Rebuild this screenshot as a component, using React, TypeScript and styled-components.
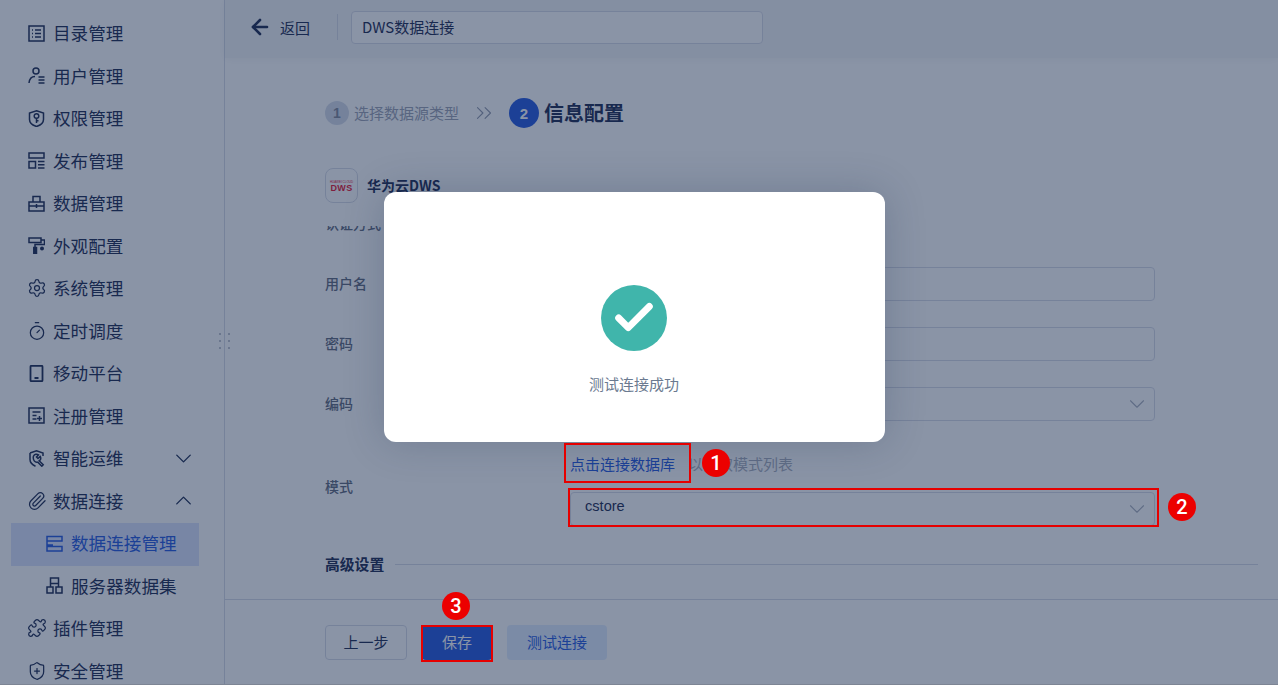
import { ReactNode } from 'react';
import styled, { createGlobalStyle } from 'styled-components';
import { ArrowLeft, Check, ChevronDown, ChevronUp, ChevronsRight, Paperclip, Puzzle, Settings, ShieldPlus, Timer } from 'lucide-react';

const GlobalStyle = createGlobalStyle`
html, body {
  margin: 0;
  height: 100%;
  overflow: hidden;
  background: #fff;
  font-family: "Noto Sans CJK SC", "Liberation Sans", sans-serif;
  color: #1a2850;
}
* { box-sizing: border-box; }
`

const Frame = styled.div`
position: relative;
display: flex;
height: 685px;
width: 1278px;
overflow: hidden;
border-bottom: 1px solid #7d8594;
`

const Sidebar = styled.nav`
flex: 0 0 225px;
padding: 13px 25px 0 11px;
border-right: 1px solid #d7dbe7;
overflow: hidden;
`

const NavRow = styled.div<{ $active?: boolean; $sub?: boolean }>`
display: flex;
align-items: center;
height: 42.5px;
padding-left: ${props => props.$sub ? '35px' : '17px'};
padding-bottom: 2px;
font-size: 17.6px;
line-height: 1;
color: ${props => props.$active ? '#2357df' : '#1a2850'};
background: ${props => props.$active ? '#dbe3fd' : 'transparent'};
`

const NavIcon = styled.span<{ $sub?: boolean }>`
display: flex;
align-items: center;
justify-content: center;
width: 17px;
height: 17px;
margin-right: 8px;
svg { display: block; flex: none; }
`

const NavArrow = styled.span`
display: flex;
margin-left: auto;
margin-right: 2px;
`

const Main = styled.main`
flex: 1;
min-width: 0;
display: flex;
flex-direction: column;
`

const TopBar = styled.header`
flex: 0 0 58px;
display: flex;
align-items: center;
padding: 0 0 4px 23px;
background: #f3f4f6;
box-shadow: 0 1px 8px rgba(31, 45, 83, 0.06);
`

const BackLink = styled.span`
display: flex;
align-items: center;
gap: 8px;
font-size: 15px;
`

const TopDivider = styled.span`
width: 1px;
height: 26px;
margin: 0 13px 0 27px;
background: #d7dbe7;
`

const NameBox = styled.div`
width: 412px;
height: 33px;
padding-left: 10px;
border: 1px solid #d7dbe7;
border-radius: 4px;
background: #fff;
font-size: 15px;
line-height: 30px;
`

const Body = styled.section`
flex: 1;
min-height: 0;
display: flex;
flex-direction: column;
padding: 40px 20px 0 100px;
`

const Steps = styled.div`
display: flex;
align-items: center;
height: 30px;
`

const StepDot = styled.span<{ $current?: boolean }>`
display: flex;
align-items: center;
justify-content: center;
border-radius: 50%;
font-family: "Liberation Sans", sans-serif;
font-weight: 700;
width: ${props => props.$current ? '30px' : '24px'};
height: ${props => props.$current ? '30px' : '24px'};
font-size: ${props => props.$current ? '15px' : '14px'};
background: ${props => props.$current ? '#2357df' : '#d5dbe9'};
color: ${props => props.$current ? '#fff' : '#7f8698'};
`

const StepDone = styled.span`
margin: 0 0 2px 5px;
font-size: 15px;
color: #9aa1b3;
`

const StepArrow = styled.span`
display: flex;
width: 50px;
justify-content: center;
color: #8f97ab;
`

const StepNow = styled.span`
margin: 0 0 2px 5px;
font-size: 20px;
font-weight: 700;
`

const SourceHead = styled.div`
display: flex;
align-items: center;
gap: 9px;
margin-top: 40px;
height: 35px;
`

const LogoBox = styled.div`
display: flex;
flex-direction: column;
align-items: center;
justify-content: center;
width: 33px;
height: 35px;
border: 1px solid #d7dbe7;
border-radius: 8px;
color: #e8132f;
`

const LogoSmall = styled.span`
font-family: "Liberation Sans", sans-serif;
font-size: 3px;
line-height: 4px;
`

const LogoBig = styled.span`
font-family: "Liberation Sans", sans-serif;
font-size: 9px;
line-height: 8px;
font-weight: 700;
letter-spacing: 0.3px;
`

const SourceName = styled.span`
margin-bottom: 1px;
font-size: 14px;
font-weight: 700;
`

const FormScroll = styled.div`
flex: 1;
min-height: 0;
margin-top: 23px;
overflow: hidden;
`

// the form is scrolled a little in the reference, first row is cut by the head
const FormInner = styled.div`
margin-top: -32px;
`

const FormRow = styled.div<{ $tall?: boolean }>`
display: flex;
align-items: center;
height: ${props => props.$tall ? '79px' : '60px'};
margin-top: ${props => props.$tall ? '13px' : '0'};
`

const Label = styled.label`
flex: 0 0 245px;
margin-bottom: 2px;
font-size: 14px;
font-weight: 500;
color: #5f687c;
`

const Control = styled.div`
width: 585px;
`

const Field = styled.div`
display: flex;
align-items: center;
justify-content: space-between;
height: 34px;
padding: 0 4px 0 15px;
border: 1px solid #d7dbe7;
border-radius: 4px;
background: #fff;
color: #a9afbd;
`

const FieldValue = styled.span`
margin: 0 0 6px -1px;
font-family: "Liberation Sans", sans-serif;
font-size: 14.6px;
color: #1a2850;
`

const HintLine = styled.div`
display: flex;
align-items: center;
gap: 13px;
height: 36px;
margin-bottom: 9px;
padding-bottom: 4px;
font-size: 15px;
`

const HintLink = styled.a`
color: #2357df;
`

const HintText = styled.span`
color: #a9afbd;
`

const Advanced = styled.div`
display: flex;
align-items: center;
gap: 11px;
height: 20px;
margin-top: 28px;
font-size: 14.8px;
font-weight: 700;
line-height: 16px;
&::after {
  content: "";
  flex: 1;
  height: 1px;
  margin-top: 1px;
  background: #d7dbe7;
}
`

const Footer = styled.footer`
flex: 0 0 85px;
display: flex;
gap: 15px;
align-items: flex-start;
padding: 25px 0 0 100px;
border-top: 1px solid #d7dbe7;
background: #fff;
`

const Button = styled.button<{ $kind: 'plain' | 'primary' | 'soft'; $w: number }>`
width: ${props => props.$w}px;
height: 35px;
padding: 0 0 2px;
border-radius: 4px;
font: 15px "Noto Sans CJK SC", sans-serif;
border: ${props => props.$kind === 'plain' ? '1px solid #d7dbe7' : 'none'};
background: ${props => props.$kind === 'primary' ? '#2357df' : props.$kind === 'soft' ? '#e1edff' : '#fff'};
color: ${props => props.$kind === 'primary' ? '#fff' : props.$kind === 'soft' ? '#2357df' : '#1a2850'};
`

const Handle = styled.div`
position: absolute;
left: 219px;
top: 333px;
display: grid;
grid-template-columns: 2px 2px;
column-gap: 7px;
row-gap: 5px;
`

const HandleDot = styled.i`
width: 2px;
height: 2px;
border-radius: 50%;
background: #a9afbd;
`

const Overlay = styled.div`
position: absolute;
inset: 0;
background: rgba(21, 41, 77, 0.5);
`

const Modal = styled.div`
position: absolute;
left: 384px;
top: 192px;
width: 501px;
height: 250px;
display: flex;
flex-direction: column;
align-items: center;
padding-top: 93px;
border-radius: 12px;
background: #fff;
box-shadow: 0 0 40px rgba(21, 41, 77, 0.22);
`

const SuccessMark = styled.div`
display: flex;
align-items: center;
justify-content: center;
width: 66px;
height: 66px;
margin-right: 1px;
border-radius: 50%;
background: #40b5ab;
color: #fff;
`

const ModalText = styled.p`
margin: 22px 1px 0 0;
font-size: 15px;
line-height: 22px;
color: #6b7a90;
`

const RedBox = styled.div<{ $x: number; $y: number; $w: number; $h: number }>`
position: absolute;
left: ${props => props.$x}px;
top: ${props => props.$y}px;
width: ${props => props.$w}px;
height: ${props => props.$h}px;
border: 2px solid #e60000;
`

const Badge = styled.span<{ $x: number; $y: number }>`
position: absolute;
left: ${props => props.$x - 14}px;
top: ${props => props.$y - 14}px;
display: flex;
align-items: center;
justify-content: center;
width: 28px;
height: 28px;
border-radius: 50%;
background: #ec0000;
color: #fff;
font-family: Roboto, "Liberation Sans", sans-serif;
font-size: 20px;
font-weight: 500;
`

const Glyph = ({ children }: { children: ReactNode }) => (
  <svg width="17" height="17" viewBox="0 0 17 17" fill="none" stroke="currentColor" strokeWidth="1.5">
    {children}
  </svg>
);

const icons: Record<string, ReactNode> = {
  catalog: <Glyph><rect x="1" y="1" width="15" height="15" /><path d="M4 5h1M7 5h6M4 8.500h1M7 8.500h6M4 12h1M7 12h6" /></Glyph>,
  user: <Glyph><circle cx="8" cy="4" r="3" /><path d="M1 16c.4-3.800 2.600-6.500 6-6.500M10.500 10h6M10.500 13h6M10.500 16h6" /></Glyph>,
  perm: <Glyph><path d="M8.500 .8l7 2.200v6.500c0 3.200-3.200 5.800-7 7-3.800-1.200-7-3.800-7-7V3z" /><circle cx="8.500" cy="6" r="2.300" /><path d="M8.500 8.300v4.700M8.500 10.800h2" /></Glyph>,
  publish: <Glyph><path d="M1 1h15v5H1zM1 9.500h6.500V16H1zM10 9.500h6.500M10 12.800h6.500M10 16h6.500" /></Glyph>,
  data: <Glyph><path d="M1 7h15v9H1zM5 7V1.500h7V7M1 11h15M8.500 9v4" /></Glyph>,
  look: <Glyph><path d="M1 1h12v4.500H1zM13 3h3.500v4.500H7V10" /><path d="M5.800 10.500h2.700V16.500H5.800z" fill="currentColor" /><circle cx="14" cy="11.500" r="2" fill="currentColor" stroke="none" /></Glyph>,
  mobile: <Glyph><rect x="2.500" y=".8" width="12" height="15.400" rx="1" strokeWidth="1.800" /><path d="M6.500 13h4" strokeWidth="2" /></Glyph>,
  register: <Glyph><path d="M1 1h15v15H1zM4.500 5h8M4.500 8.500h4M4.500 12h4M11.500 9v5M9 11.500h5" /></Glyph>,
  ops: <Glyph><path d="M2 3l6.500-2.200L15 3v3M2 3v6.500c0 3 2.500 5.300 5.500 6.700" /><path d="M5.500 6c1-2 3.400-2.300 5-1.200L8.500 7l1.500 1.500 2.200-2c1 1.700.6 3.500-1 4.300l4 4-1.400 1.400-4-4C7 13 4.500 10 5.500 6z" /></Glyph>,
  conn: <Glyph><path d="M1 1.500h15v4.500H1zM1 6v4h6M1 11.500h15V16H1z" /></Glyph>,
  server: <Glyph><path d="M4.500 1h8v5.500h-8zM1 10h6v6H1zM10 10h6v6h-6zM4.500 6.500V10M12.500 6.500V10" /></Glyph>,
};

const lucide = { size: 20, strokeWidth: 1.5 };

const NAV: { label: string; icon: ReactNode; sub?: boolean; active?: boolean; arrow?: 'up' | 'down' }[] = [
  { label: '目录管理', icon: icons.catalog },
  { label: '用户管理', icon: icons.user },
  { label: '权限管理', icon: icons.perm },
  { label: '发布管理', icon: icons.publish },
  { label: '数据管理', icon: icons.data },
  { label: '外观配置', icon: icons.look },
  { label: '系统管理', icon: <Settings {...lucide} /> },
  { label: '定时调度', icon: <Timer {...lucide} /> },
  { label: '移动平台', icon: icons.mobile },
  { label: '注册管理', icon: icons.register },
  { label: '智能运维', icon: icons.ops, arrow: 'down' },
  { label: '数据连接', icon: <Paperclip {...lucide} />, arrow: 'up' },
  { label: '数据连接管理', icon: icons.conn, sub: true, active: true },
  { label: '服务器数据集', icon: icons.server, sub: true },
  { label: '插件管理', icon: <Puzzle {...lucide} /> },
  { label: '安全管理', icon: <ShieldPlus {...lucide} /> },
];

const DOTS = [0, 1, 2, 3, 4, 5];

export default function App() {
  return (
    <Frame>
      <GlobalStyle />
      <Sidebar>
        {NAV.map(item => (
          <NavRow key={item.label} $active={item.active} $sub={item.sub}>
            <NavIcon $sub={item.sub}>{item.icon}</NavIcon>
            {item.label}
            {item.arrow && (
              <NavArrow>
                {item.arrow === 'up' ? <ChevronUp size={27} strokeWidth={1.2} /> : <ChevronDown size={27} strokeWidth={1.2} />}
              </NavArrow>
            )}
          </NavRow>
        ))}
      </Sidebar>
      <Main>
        <TopBar>
          <BackLink><ArrowLeft size={24} strokeWidth={2.6} />返回</BackLink>
          <TopDivider />
          <NameBox>DWS数据连接</NameBox>
        </TopBar>
        <Body>
          <Steps>
            <StepDot>1</StepDot>
            <StepDone>选择数据源类型</StepDone>
            <StepArrow><ChevronsRight size={26} strokeWidth={1} /></StepArrow>
            <StepDot $current>2</StepDot>
            <StepNow>信息配置</StepNow>
          </Steps>
          <SourceHead>
            <LogoBox>
              <LogoSmall>HUAWEI CLOUD</LogoSmall>
              <LogoBig>DWS</LogoBig>
            </LogoBox>
            <SourceName>华为云DWS</SourceName>
          </SourceHead>
          <FormScroll>
            <FormInner>
              <FormRow>
                <Label>认证方式</Label>
              </FormRow>
              <FormRow>
                <Label>用户名</Label>
                <Control><Field /></Control>
              </FormRow>
              <FormRow>
                <Label>密码</Label>
                <Control><Field /></Control>
              </FormRow>
              <FormRow>
                <Label>编码</Label>
                <Control><Field><span /><ChevronDown size={26} strokeWidth={1} /></Field></Control>
              </FormRow>
              <FormRow $tall>
                <Label>模式</Label>
                <Control>
                  <HintLine>
                    <HintLink>点击连接数据库</HintLink>
                    <HintText>以获取模式列表</HintText>
                  </HintLine>
                  <Field><FieldValue>cstore</FieldValue><ChevronDown size={26} strokeWidth={1} /></Field>
                </Control>
              </FormRow>
              <Advanced>高级设置</Advanced>
            </FormInner>
          </FormScroll>
        </Body>
        <Footer>
          <Button $kind="plain" $w={82}>上一步</Button>
          <Button $kind="primary" $w={70}>保存</Button>
          <Button $kind="soft" $w={100}>测试连接</Button>
        </Footer>
      </Main>
      <Handle>{DOTS.map(d => <HandleDot key={d} />)}</Handle>
      <Overlay />
      <Modal>
        <SuccessMark><Check size={46} strokeWidth={3.6} /></SuccessMark>
        <ModalText>测试连接成功</ModalText>
      </Modal>
      <RedBox $x={564} $y={443} $w={127} $h={40} />
      <RedBox $x={568} $y={488} $w={591} $h={39} />
      <RedBox $x={421} $y={625} $w={72} $h={37} />
      <Badge $x={716} $y={463}>1</Badge>
      <Badge $x={1182} $y={507}>2</Badge>
      <Badge $x={456} $y={606}>3</Badge>
    </Frame>
  );
}
